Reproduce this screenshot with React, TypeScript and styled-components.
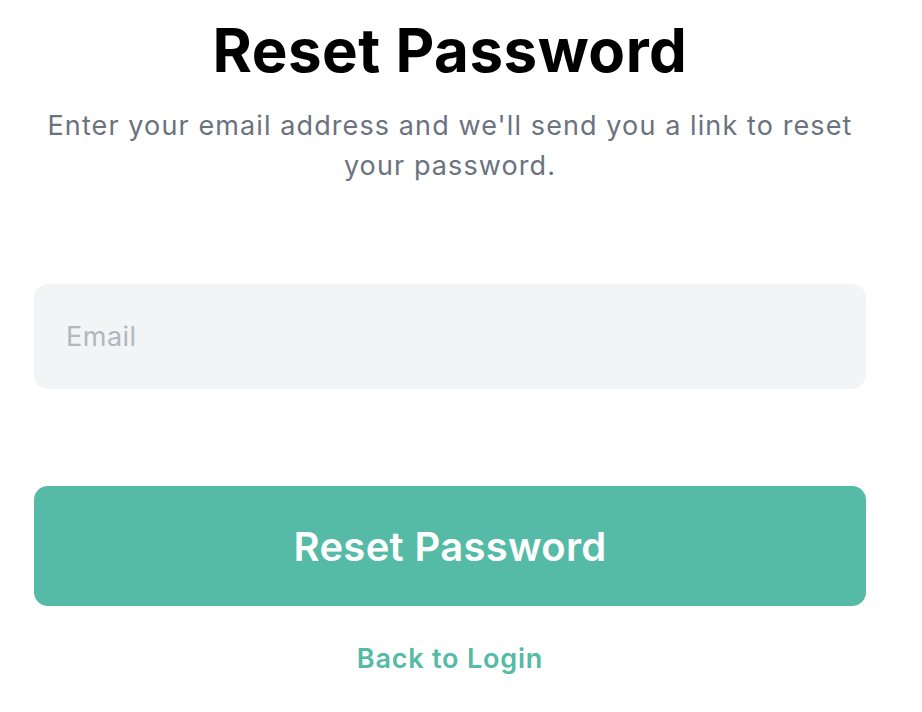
import React from "react";
import styled, { createGlobalStyle } from "styled-components";

const Global = createGlobalStyle`
  html, body { margin: 0; padding: 0; background: #ffffff; }
  body { font-family: "Inter", "Noto Sans", sans-serif; }
  * { box-sizing: border-box; }
`;

const Page = styled.div`
  width: 900px;
  padding: 14px 34px 0;
  display: flex;
  flex-direction: column;
  align-items: stretch;
`;

const Title = styled.h1`
  margin: 0;
  text-align: center;
  font-size: 60px;
  line-height: 72px;
  font-weight: 700;
  color: #000000;
  letter-spacing: 0.5px;
`;

const Subtitle = styled.p`
  margin: 20px 0 0;
  text-align: center;
  font-size: 27px;
  line-height: 40px;
  font-weight: 400;
  letter-spacing: 1.1px;
  color: #6b7280;
`;

const Input = styled.input`
  margin-top: 98px;
  height: 105px;
  width: 100%;
  border: none;
  outline: none;
  border-radius: 14px;
  background: #f3f4f6;
  padding: 0 32px;
  font-family: inherit;
  font-size: 27px;
  letter-spacing: 0.5px;
  color: #111827;
  &::placeholder { color: #b3b6bd; }
`;

const Button = styled.button`
  margin-top: 97px;
  height: 120px;
  width: 100%;
  border: none;
  border-radius: 14px;
  background: #55bba6;
  color: #ffffff;
  font-family: inherit;
  font-size: 40px;
  font-weight: 600;
  letter-spacing: 0.3px;
  cursor: pointer;
`;

const LinkText = styled.a`
  margin-top: 36px;
  align-self: center;
  font-size: 27px;
  font-weight: 600;
  letter-spacing: 0.8px;
  color: #55bba6;
  text-decoration: none;
`;

export default function App() {
  return (
    <>
      <Global />
      <Page>
        <Title>Reset Password</Title>
        <Subtitle>
          Enter your email address and we'll send you a link to reset your password.
        </Subtitle>
        <Input type="email" placeholder="Email" />
        <Button>Reset Password</Button>
        <LinkText href="#">Back to Login</LinkText>
      </Page>
    </>
  );
}
